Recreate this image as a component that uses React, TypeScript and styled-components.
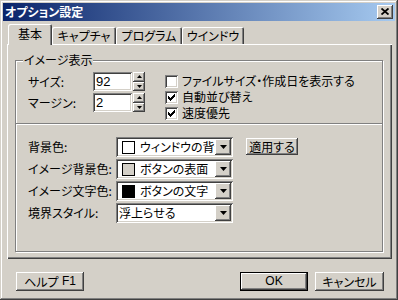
import React from 'react'
import styled, { createGlobalStyle } from 'styled-components'

const face = '#D4D0C8'
const shadow = '#808080'
const dark = '#404040'

const GlobalStyle = createGlobalStyle`
  html, body {
    margin: 0;
    padding: 0;
    background: ${face};
  }
  body {
    font-family: "Noto Sans CJK JP", "Noto Sans", sans-serif;
    font-size: 12px;
    color: #000;
    font-feature-settings: "palt";
  }
  * {
    box-sizing: border-box;
  }
`

const raised = `
  background: ${face};
  box-shadow: inset -1px -1px ${dark}, inset 1px 1px #fff, inset -2px -2px ${shadow}, inset 2px 2px ${face};
`

const sunken = `
  background: #fff;
  box-shadow: inset 1px 1px ${shadow}, inset -1px -1px #fff, inset 2px 2px ${dark}, inset -2px -2px ${face};
`

const Window = styled.div`
  width: 398px;
  height: 300px;
  padding: 3px;
  background: ${face};
  box-shadow: inset -1px -1px ${dark}, inset 1px 1px ${face}, inset -2px -2px ${shadow}, inset 2px 2px #fff;
  display: flex;
  flex-direction: column;
`

const TitleBar = styled.div`
  height: 18px;
  display: flex;
  align-items: center;
  justify-content: space-between;
  padding: 0 2px;
  background: linear-gradient(to right, #0a246a, #a6caf0);
`

const TitleText = styled.div`
  color: #fff;
  font-weight: bold;
  font-size: 12px;
  line-height: 16px;
  padding-left: 0;
`

const CloseButton = styled.div`
  ${raised}
  width: 16px;
  height: 14px;
  display: flex;
  align-items: center;
  justify-content: center;
  padding-bottom: 1px;
`

const Body = styled.div`
  flex: 1;
  display: flex;
  flex-direction: column;
  padding: 3px 3px 0 4px;
`

const TabRow = styled.div`
  display: flex;
  align-items: flex-end;
  padding-left: 1px;
  height: 20px;
  position: relative;
  z-index: 1;
`

const Tab = styled.div<{ $active?: boolean; $w: number }>`
  width: ${p => p.$w}px;
  height: ${p => (p.$active ? 21 : 17)}px;
  margin-bottom: ${p => (p.$active ? -1 : 0)}px;
  background: ${face};
  border-radius: 2px 2px 0 0;
  box-shadow: inset 1px 1px #fff, inset -1px 0 ${dark}, inset -2px 0 ${shadow};
  display: flex;
  align-items: ${p => (p.$active ? 'center' : 'flex-start')};
  justify-content: center;
  line-height: 15px;
  padding-top: ${p => (p.$active ? 0 : 1)}px;
  padding-bottom: ${p => (p.$active ? 2 : 0)}px;
  font-size: 12px;
`

const Panel = styled.div`
  width: 385px;
  height: 215px;
  background: ${face};
  box-shadow: inset 1px 1px #fff, inset -1px -1px ${dark}, inset -2px -2px ${shadow};
  padding: 16px 8px 7px 8px;
`

const GroupBox = styled.div`
  position: relative;
  height: 100%;
  width: 368px;
  border: 1px solid ${shadow};
  box-shadow: inset 1px 1px #fff, 1px 1px #fff;
  display: flex;
  flex-direction: column;
`

const Legend = styled.div`
  position: absolute;
  top: -8px;
  left: 7px;
  padding: 0 1px 0 1px;
  background: ${face};
  line-height: 14px;
`

const TopSection = styled.div`
  height: 62px;
  display: flex;
  padding: 11px 0 0 12px;
`

const SizeGrid = styled.div`
  display: grid;
  grid-template-columns: 64px 39px 12px;
  grid-auto-rows: 19px;
  column-gap: 1px;
  row-gap: 2px;
  align-items: center;
`

const Label = styled.div`
  line-height: 16px;
  white-space: nowrap;
`

const NumberField = styled.div`
  ${sunken}
  height: 19px;
  padding: 2px 3px;
  line-height: 15px;
  font-family: "Liberation Sans", Arial, sans-serif;
  font-size: 13px;
`

const Spin = styled.div`
  display: flex;
  flex-direction: column;
  height: 19px;
`

const SpinButton = styled.div`
  ${raised}
  flex: 1;
  display: flex;
  align-items: center;
  justify-content: center;
`

const CheckList = styled.div`
  display: flex;
  flex-direction: column;
  margin-left: 20px;
  padding-top: 1px;
`

const CheckRow = styled.div`
  height: 16px;
  display: flex;
  align-items: center;
  gap: 4px;
`

const CheckBox = styled.div`
  ${sunken}
  width: 13px;
  height: 13px;
  display: flex;
  align-items: center;
  justify-content: center;
`

const Separator = styled.div`
  height: 2px;
  border-top: 1px solid ${shadow};
  border-bottom: 1px solid #fff;
`

const BottomSection = styled.div`
  display: flex;
  align-items: flex-start;
  padding: 12px 0 0 12px;
`

const ColorGrid = styled.div`
  display: grid;
  grid-template-columns: 88px 117px;
  grid-auto-rows: 20px;
  row-gap: 2px;
  align-items: center;
`

const Combo = styled.div`
  ${sunken}
  height: 20px;
  display: flex;
  align-items: center;
  padding: 2px;
`

const ComboValue = styled.div<{ $swatch?: boolean }>`
  flex: 1;
  min-width: 0;
  display: flex;
  align-items: center;
  gap: 5px;
  padding-left: ${p => (p.$swatch ? 4 : 1)}px;
  overflow: hidden;
  white-space: nowrap;
  line-height: 16px;
`

const Swatch = styled.div<{ $color: string }>`
  flex: none;
  width: 13px;
  height: 13px;
  border: 1px solid #000;
  background: ${p => p.$color};
`

const DropButton = styled.div`
  ${raised}
  flex: none;
  width: 16px;
  height: 16px;
  display: flex;
  align-items: center;
  justify-content: center;
`

const Button = styled.div<{ $w: number; $h?: number }>`
  ${raised}
  width: ${p => p.$w}px;
  height: ${p => p.$h ?? 19}px;
  display: flex;
  align-items: center;
  justify-content: center;
  line-height: 15px;
  white-space: nowrap;
`

const DefaultButton = styled(Button)`
  box-shadow: inset 0 0 0 1px #000, inset -2px -2px ${dark}, inset 2px 2px #fff, inset -3px -3px ${shadow};
`

const ApplyButton = styled(Button)`
  margin-left: 13px;
  margin-top: 1px;
`

const Footer = styled.div`
  display: flex;
  align-items: center;
  padding: 13px 8px 0 9px;
  gap: 7px;
`

const Spacer = styled.div`
  flex: 1;
`

const Latin = styled.span`
  font-family: "Liberation Sans", Arial, sans-serif;
`

const UpArrow = () => (
  <svg width="5" height="3" viewBox="0 0 5 3">
    <path d="M2.5 0 L5 3 L0 3 Z" fill="#000" />
  </svg>
)

const DownArrow = ({ w = 5, h = 3 }: { w?: number; h?: number }) => (
  <svg width={w} height={h} viewBox={`0 0 ${w} ${h}`}>
    <path d={`M0 0 L${w} 0 L${w / 2} ${h} Z`} fill="#000" />
  </svg>
)

const Check = () => (
  <svg width="7" height="7" viewBox="0 0 7 7">
    <path d="M0 2 L2 4 L7 -1 L7 2 L2 7 L0 5 Z" fill="#000" shapeRendering="crispEdges" />
  </svg>
)

const colorRows = [
  { label: '背景色:', swatch: '#fff', text: 'ウィンドウの背景色' },
  { label: 'イメージ背景色:', swatch: face, text: 'ボタンの表面' },
  { label: 'イメージ文字色:', swatch: '#000', text: 'ボタンの文字' },
  { label: '境界スタイル:', swatch: '', text: '浮上らせる' },
]

export default function App() {
  return (
    <>
      <GlobalStyle />
      <Window>
        <TitleBar>
          <TitleText>オプション設定</TitleText>
          <CloseButton>
            <svg width="8" height="7" viewBox="0 0 8 7">
              <path d="M0.5 0.5 L7.5 6.5 M7.5 0.5 L0.5 6.5" stroke="#000" strokeWidth="1.8" />
            </svg>
          </CloseButton>
        </TitleBar>
        <Body>
          <TabRow>
            <Tab $active $w={44}>基本</Tab>
            <Tab $w={64}>キャプチャ</Tab>
            <Tab $w={66}>プログラム</Tab>
            <Tab $w={62}>ウインドウ</Tab>
          </TabRow>
          <Panel>
            <GroupBox>
              <Legend>イメージ表示</Legend>
              <TopSection>
                <SizeGrid>
                  <Label>サイズ:</Label>
                  <NumberField>92</NumberField>
                  <Spin>
                    <SpinButton><UpArrow /></SpinButton>
                    <SpinButton><DownArrow /></SpinButton>
                  </Spin>
                  <Label>マージン:</Label>
                  <NumberField>2</NumberField>
                  <Spin>
                    <SpinButton><UpArrow /></SpinButton>
                    <SpinButton><DownArrow /></SpinButton>
                  </Spin>
                </SizeGrid>
                <CheckList>
                  <CheckRow>
                    <CheckBox />
                    <Label>ファイルサイズ・作成日を表示する</Label>
                  </CheckRow>
                  <CheckRow>
                    <CheckBox><Check /></CheckBox>
                    <Label>自動並び替え</Label>
                  </CheckRow>
                  <CheckRow>
                    <CheckBox><Check /></CheckBox>
                    <Label>速度優先</Label>
                  </CheckRow>
                </CheckList>
              </TopSection>
              <Separator />
              <BottomSection>
                <ColorGrid>
                  {colorRows.map(r => (
                    <React.Fragment key={r.label}>
                      <Label>{r.label}</Label>
                      <Combo>
                        <ComboValue $swatch={!!r.swatch}>
                          {r.swatch && <Swatch $color={r.swatch} />}
                          {r.text}
                        </ComboValue>
                        <DropButton><DownArrow w={7} h={4} /></DropButton>
                      </Combo>
                    </React.Fragment>
                  ))}
                </ColorGrid>
                <ApplyButton $w={52} $h={17}>適用する</ApplyButton>
              </BottomSection>
            </GroupBox>
          </Panel>
          <Footer>
            <Button $w={68}>ヘルプ <Latin>&nbsp;F1</Latin></Button>
            <Spacer />
            <DefaultButton $w={68}><Latin>OK</Latin></DefaultButton>
            <Button $w={69}>キャンセル</Button>
          </Footer>
        </Body>
      </Window>
    </>
  )
}
